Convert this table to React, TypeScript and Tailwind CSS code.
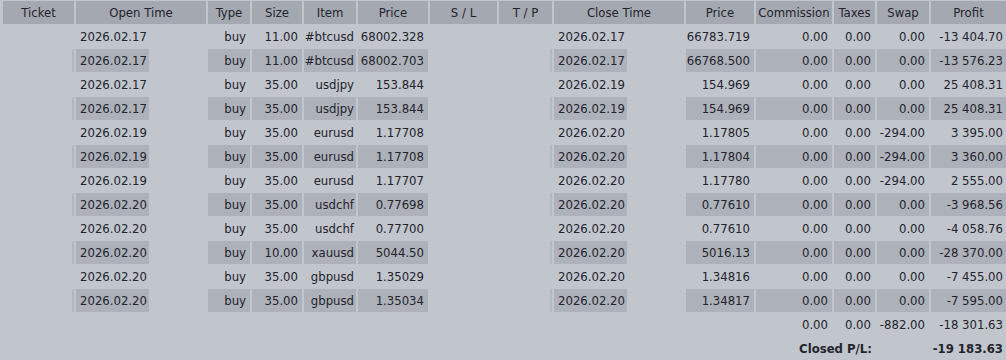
import React from "react";

type Row = {
  od: string; type: string; size: string; item: string; price: string;
  cd: string; cprice: string; comm: string; taxes: string; swap: string; profit: string;
};

const rows: Row[] = [
  { od: "2026.02.17", type: "buy", size: "11.00", item: "#btcusd", price: "68002.328", cd: "2026.02.17", cprice: "66783.719", comm: "0.00", taxes: "0.00", swap: "0.00", profit: "-13 404.70" },
  { od: "2026.02.17", type: "buy", size: "11.00", item: "#btcusd", price: "68002.703", cd: "2026.02.17", cprice: "66768.500", comm: "0.00", taxes: "0.00", swap: "0.00", profit: "-13 576.23" },
  { od: "2026.02.17", type: "buy", size: "35.00", item: "usdjpy", price: "153.844", cd: "2026.02.19", cprice: "154.969", comm: "0.00", taxes: "0.00", swap: "0.00", profit: "25 408.31" },
  { od: "2026.02.17", type: "buy", size: "35.00", item: "usdjpy", price: "153.844", cd: "2026.02.19", cprice: "154.969", comm: "0.00", taxes: "0.00", swap: "0.00", profit: "25 408.31" },
  { od: "2026.02.19", type: "buy", size: "35.00", item: "eurusd", price: "1.17708", cd: "2026.02.20", cprice: "1.17805", comm: "0.00", taxes: "0.00", swap: "-294.00", profit: "3 395.00" },
  { od: "2026.02.19", type: "buy", size: "35.00", item: "eurusd", price: "1.17708", cd: "2026.02.20", cprice: "1.17804", comm: "0.00", taxes: "0.00", swap: "-294.00", profit: "3 360.00" },
  { od: "2026.02.19", type: "buy", size: "35.00", item: "eurusd", price: "1.17707", cd: "2026.02.20", cprice: "1.17780", comm: "0.00", taxes: "0.00", swap: "-294.00", profit: "2 555.00" },
  { od: "2026.02.20", type: "buy", size: "35.00", item: "usdchf", price: "0.77698", cd: "2026.02.20", cprice: "0.77610", comm: "0.00", taxes: "0.00", swap: "0.00", profit: "-3 968.56" },
  { od: "2026.02.20", type: "buy", size: "35.00", item: "usdchf", price: "0.77700", cd: "2026.02.20", cprice: "0.77610", comm: "0.00", taxes: "0.00", swap: "0.00", profit: "-4 058.76" },
  { od: "2026.02.20", type: "buy", size: "10.00", item: "xauusd", price: "5044.50", cd: "2026.02.20", cprice: "5016.13", comm: "0.00", taxes: "0.00", swap: "0.00", profit: "-28 370.00" },
  { od: "2026.02.20", type: "buy", size: "35.00", item: "gbpusd", price: "1.35029", cd: "2026.02.20", cprice: "1.34816", comm: "0.00", taxes: "0.00", swap: "0.00", profit: "-7 455.00" },
  { od: "2026.02.20", type: "buy", size: "35.00", item: "gbpusd", price: "1.35034", cd: "2026.02.20", cprice: "1.34817", comm: "0.00", taxes: "0.00", swap: "0.00", profit: "-7 595.00" },
];

const H = "bg-[#a4a8b0] flex items-center justify-center";

function DataRow({ r, shaded }: { r: Row; shaded: boolean }) {
  const s = shaded ? "bg-[#adb1b9]" : "";
  const R = `${s} flex items-center justify-end pr-1`;
  const L = `${s} flex items-center pl-1`;
  return (
    <>
      <div className="flex justify-end">
        {shaded && <div className="w-[2px] bg-[#b3b7bf]" />}
      </div>
      <div className={L}>{r.od}</div>
      <div />
      <div className={R}>{r.type}</div>
      <div className={R}>{r.size}</div>
      <div className={`${R} pr-[2px]`}>{r.item}</div>
      <div className={R}>{r.price}</div>
      <div />
      <div className="flex justify-end">
        {shaded && <div className="w-[2px] bg-[#b3b7bf]" />}
      </div>
      <div className={L}>{r.cd}</div>
      <div />
      <div className={R}>{r.cprice}</div>
      <div className={R}>{r.comm}</div>
      <div className={R}>{r.taxes}</div>
      <div className={R}>{r.swap}</div>
      <div className={`${R} pr-[3px]`}>{r.profit}</div>
    </>
  );
}

export default function App() {
  return (
    <div
      className="w-[1006px] h-[360px] overflow-hidden bg-[#c1c5cc] text-[#24242c] text-[13px] leading-none"
      style={{ fontFamily: '"DejaVu Sans Condensed", "DejaVu Sans", sans-serif', fontStretch: "condensed" }}
    >
      <div className="grid grid-cols-[71px_73px_55px_42px_50px_52px_70px_67px_53px_73px_55px_68px_76px_41px_52px_75px] auto-rows-[23px] gap-x-[2px] gap-y-px pl-[3px] pt-px">
        <div className={H}>Ticket</div>
        <div className={`${H} col-span-2`}>Open Time</div>
        <div className={H}>Type</div>
        <div className={H}>Size</div>
        <div className={H}>Item</div>
        <div className={H}>Price</div>
        <div className={H}>S / L</div>
        <div className={H}>T / P</div>
        <div className={`${H} col-span-2`}>Close Time</div>
        <div className={H}>Price</div>
        <div className={H}>Commission</div>
        <div className={H}>Taxes</div>
        <div className={H}>Swap</div>
        <div className={H}>Profit</div>

        {rows.map((r, i) => (
          <DataRow key={i} r={r} shaded={i % 2 === 1} />
        ))}

        <div className="col-span-12" />
        <div className="flex items-center justify-end pr-1">0.00</div>
        <div className="flex items-center justify-end pr-1">0.00</div>
        <div className="flex items-center justify-end pr-1">-882.00</div>
        <div className="flex items-center justify-end pr-[3px]">-18 301.63</div>

        <div className="col-span-12" />
        <div className="col-span-2 flex items-center justify-end pr-[3px] font-bold">Closed P/L:</div>
        <div className="col-span-2 flex items-center justify-end pr-[3px] font-bold">-19 183.63</div>
      </div>
    </div>
  );
}
